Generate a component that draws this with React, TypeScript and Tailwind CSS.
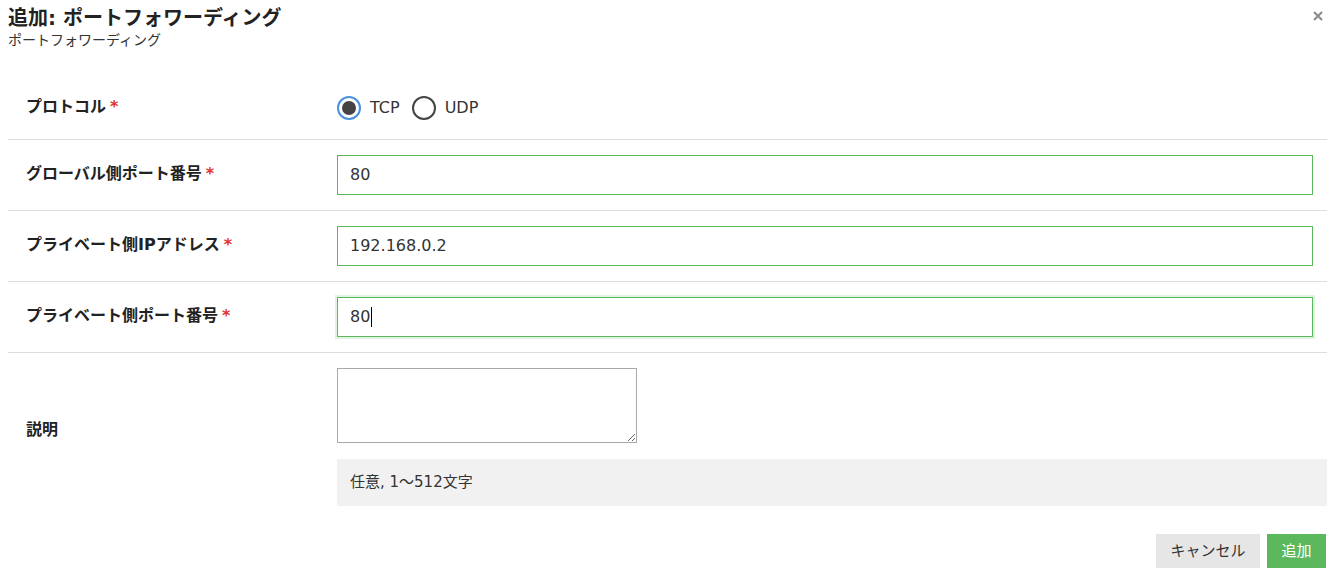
import React from "react";

const font = { fontFamily: '"DejaVu Sans", "Noto Sans CJK JP", sans-serif' };

function Label({ text, required }: { text: string; required?: boolean }) {
  return (
    <div className="w-[329px] shrink-0 pl-[18px] text-[16px] font-bold text-[#222] leading-[20px]">
      {text}
      {required && <span className="ml-[4px] text-[#e0322f]">*</span>}
    </div>
  );
}

function TextRow({ label, value, focused }: { label: string; value: string; focused?: boolean }) {
  return (
    <div className="flex items-center border-t border-[#dddddd] py-[15px]">
      <div className="-mt-[3px]">
        <Label text={label} required />
      </div>
      <div className="flex-1 pr-[14px]">
        <div
          className={
            "flex h-[40px] items-center border border-[#5cb85c] pl-[12px] text-[16px] text-[#333] " +
            (focused ? "shadow-[0_0_0_2px_rgba(92,184,92,0.18)]" : "")
          }
        >
          <span>{value}</span>
          {focused && <span className="ml-[1px] inline-block h-[20px] w-[1px] bg-black" />}
        </div>
      </div>
    </div>
  );
}

export default function App() {
  return (
    <div className="w-[1332px] h-[579px] bg-white text-[#333] overflow-hidden" style={font}>
      <div className="relative pl-[8px] pt-[5px]">
        <div className="text-[20px] font-bold leading-[26px] text-[#222]">追加: ポートフォワーディング</div>
        <div className="text-[14px] leading-[18px] text-[#333]">ポートフォワーディング</div>
        <svg className="absolute right-[9px] top-[11px]" width="10" height="10" viewBox="0 0 10 10">
          <path d="M1 1 L9 9 M9 1 L1 9" stroke="#8a8a8a" strokeWidth="2" />
        </svg>
      </div>

      <div className="mt-[20px] pl-[8px] pr-[5px]">
        {/* Protocol */}
        <div className="flex h-[70px] items-center pt-[5px]">
          <Label text="プロトコル" required />
          <div className="flex items-center mt-[3px] text-[16px] text-[#333]">
            <span className="flex h-[24px] w-[24px] items-center justify-center rounded-full border-2 border-[#4a90e2]">
              <span className="h-[14px] w-[14px] rounded-full bg-[#444]" />
            </span>
            <span className="ml-[9px]">TCP</span>
            <span className="ml-[12px] h-[24px] w-[24px] rounded-full border-2 border-[#444]" />
            <span className="ml-[9px]">UDP</span>
          </div>
        </div>

        <TextRow label="グローバル側ポート番号" value="80" />
        <TextRow label="プライベート側IPアドレス" value="192.168.0.2" />
        <TextRow label="プライベート側ポート番号" value="80" focused />

        {/* Description */}
        <div className="flex items-center border-t border-[#dddddd] pt-[15px]">
          <div className="mb-[14px]">
            <Label text="説明" />
          </div>
          <div className="flex-1">
            <textarea
              className="block h-[75px] w-[300px] resize border border-[#aaaaaa] bg-white outline-none"
              defaultValue=""
            />
            <div className="mt-[16px] flex h-[47px] items-center bg-[#f1f1f1] pl-[13px] text-[15px] text-[#333]">
              任意, 1〜512文字
            </div>
          </div>
        </div>

        <div className="mt-[28px] flex justify-end gap-[7px] pr-[1px]">
          <button className="h-[34px] w-[104px] bg-[#e6e6e6] text-[15px] text-[#333]">キャンセル</button>
          <button className="h-[34px] w-[59px] bg-[#5cb85c] text-[15px] text-white">追加</button>
        </div>
      </div>
    </div>
  );
}
